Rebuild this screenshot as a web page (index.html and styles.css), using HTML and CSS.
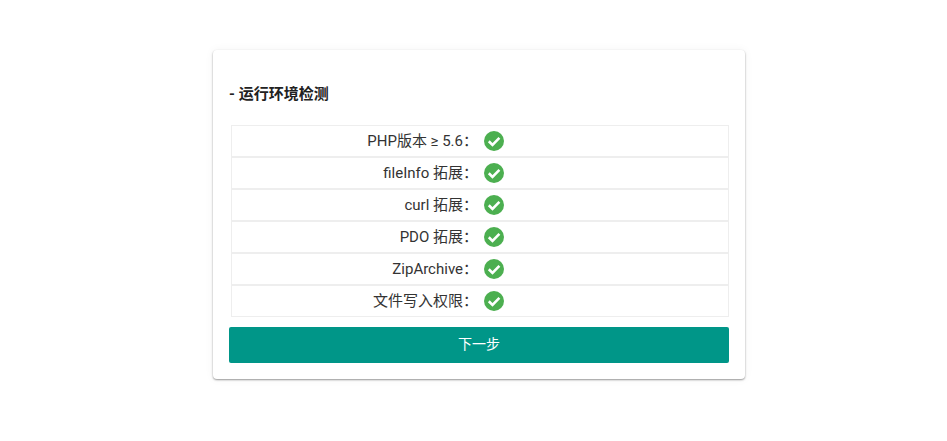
FILE: index.html
```html
<!DOCTYPE html>
<html lang="zh-CN">
<head>
<meta charset="utf-8">
<title>运行环境检测</title>
<link rel="stylesheet" href="styles.css">
</head>
<body>
<main class="card">
  <h2 class="title">- 运行环境检测</h2>
  <div class="checks">
    <div class="row"><span class="label">PHP版本 ≥ 5.6：</span><svg class="ok" viewBox="0 0 20 20"><circle cx="10" cy="10" r="10"/><path d="M4.8 10.3l3.7 3.6L15.4 6.9"/></svg></div>
    <div class="row"><span class="label">fileInfo 拓展：</span><svg class="ok" viewBox="0 0 20 20"><circle cx="10" cy="10" r="10"/><path d="M4.8 10.3l3.7 3.6L15.4 6.9"/></svg></div>
    <div class="row"><span class="label">curl 拓展：</span><svg class="ok" viewBox="0 0 20 20"><circle cx="10" cy="10" r="10"/><path d="M4.8 10.3l3.7 3.6L15.4 6.9"/></svg></div>
    <div class="row"><span class="label">PDO 拓展：</span><svg class="ok" viewBox="0 0 20 20"><circle cx="10" cy="10" r="10"/><path d="M4.8 10.3l3.7 3.6L15.4 6.9"/></svg></div>
    <div class="row"><span class="label">ZipArchive：</span><svg class="ok" viewBox="0 0 20 20"><circle cx="10" cy="10" r="10"/><path d="M4.8 10.3l3.7 3.6L15.4 6.9"/></svg></div>
    <div class="row"><span class="label">文件写入权限：</span><svg class="ok" viewBox="0 0 20 20"><circle cx="10" cy="10" r="10"/><path d="M4.8 10.3l3.7 3.6L15.4 6.9"/></svg></div>
  </div>
  <button class="next" type="button">下一步</button>
</main>
</body>
</html>
```

FILE: styles.css
```css
* { box-sizing: border-box; }
html, body { margin: 0; height: 100%; }
body {
  background: #fff;
  font-family: Roboto, "Noto Sans CJK SC", sans-serif;
  color: #212121;
  padding-top: 50px;
}
.card {
  width: 532px;
  height: 329px;
  margin-left: 213px;
  padding: 0 16px;
  background: #fff;
  border-radius: 4px;
  box-shadow: 0 1px 2px rgba(0,0,0,.4), 0 0 10px rgba(0,0,0,.05);
}
.title {
  margin: 0;
  padding-top: 33px;
  height: 75px;
  font-size: 15px;
  line-height: 22px;
  font-weight: 700;
}
.checks { margin-left: 2px; }
.row {
  height: 32px;
  display: flex;
  align-items: center;
  border: 1px solid #eee;
}
.label {
  width: 246px;
  text-align: right;
  font-size: 15px;
  line-height: 22px;
  color: #333;
}
.ok { width: 20px; height: 20px; margin-left: 6px; }
.ok circle { fill: #4caf50; }
.ok path { fill: none; stroke: #fff; stroke-width: 2.6; }
.next {
  display: block;
  width: 100%;
  height: 36px;
  margin-top: 10px;
  padding: 0 0 5px;
  border: 0;
  border-radius: 2px;
  background: #009688;
  color: #fff;
  font: 14px Roboto, "Noto Sans CJK SC", sans-serif;
}
```
